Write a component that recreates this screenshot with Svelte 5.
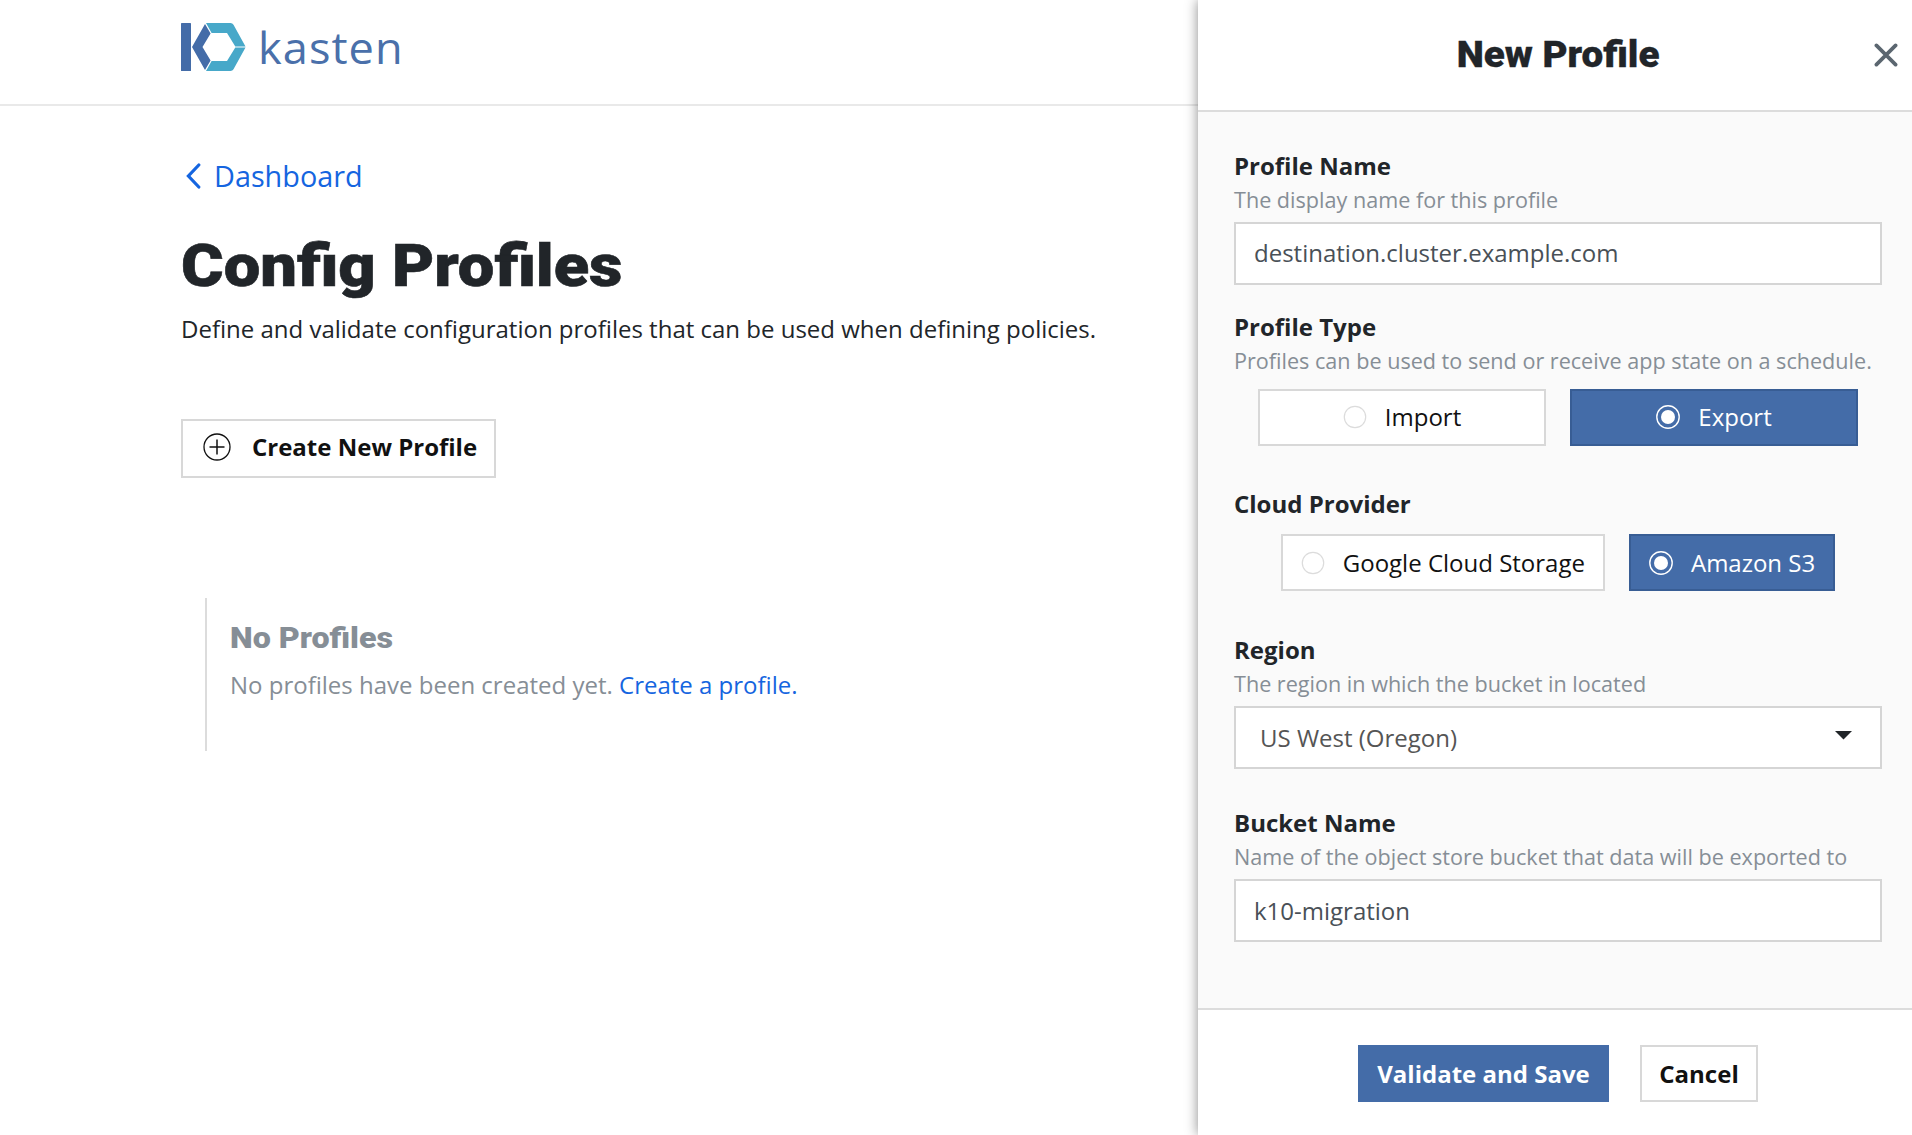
<script>
  let profileType = $state('Export');
  let provider = $state('Amazon S3');
  let profileName = $state('destination.cluster.example.com');
  let bucketName = $state('k10-migration');
  const types = ['Import', 'Export'];
  const providers = ['Google Cloud Storage', 'Amazon S3'];
</script>

{#snippet radio(name, selected, choose)}
  <button class="option" class:selected onclick={choose}>
    <svg class="radio" width="24" height="24" viewBox="0 0 24 24">
      {#if selected}
        <circle cx="12" cy="12" r="11.2" fill="none" stroke="#fff" stroke-width="1.4" />
        <circle cx="12" cy="12" r="7" fill="#fff" />
      {:else}
        <circle cx="12" cy="12" r="10.7" fill="#fff" stroke="#dcdcdc" stroke-width="1.2" />
      {/if}
    </svg>
    <span>{name}</span>
  </button>
{/snippet}

<div class="app">
  <div class="page">
    <header class="topbar">
      <svg class="mark" width="65" height="48" viewBox="0 0 65 48">
        <rect x="0" y="0" width="10" height="48" rx="0.6" fill="#446ca8" />
        <path d="M24 1 L29.6 10.5 L21.5 24 L29.6 37.5 L24 47 L11 24 Z" fill="#446ca8" />
        <path d="M25 0 H49.5 Q51.5 0 52.5 1.8 L64.5 23.4 H54.3 L46 10 H30.6 Z" fill="#47a8c9" />
        <path d="M25 48 H49.5 Q51.5 48 52.5 46.2 L64.5 24.6 H54.3 L46 38 H30.6 Z" fill="#47a8c9" />
      </svg>
      <span class="wordmark">kasten</span>
    </header>
    <main>
      <a class="back" href="#dashboard">
        <svg width="15" height="26" viewBox="0 0 15 26">
          <path d="M12.8 2 L2.4 13 L12.8 24" fill="none" stroke="#1565e0" stroke-width="3.2" stroke-linecap="round" />
        </svg>
        <span>Dashboard</span>
      </a>
      <h1>Config Profiles</h1>
      <p class="lead">Define and validate configuration profiles that can be used when defining policies.</p>
      <button class="create">
        <svg width="28" height="28" viewBox="0 0 28 28" fill="none" stroke="#111">
          <circle cx="14" cy="14" r="13" stroke-width="1.3" />
          <path d="M14 6.5 V21.5 M6.5 14 H21.5" stroke-width="1.5" />
        </svg>
        <span>Create New Profile</span>
      </button>
      <section class="empty">
        <h2>No Profiles</h2>
        <p>No profiles have been created yet. <a href="#create">Create a profile.</a></p>
      </section>
    </main>
  </div>

  <aside class="panel">
    <div class="panel-head">
      <h3>New Profile</h3>
      <button class="close" aria-label="Close">
        <svg width="24" height="24" viewBox="0 0 24 24">
          <path d="M2.4 2.4 L21.6 21.6 M21.6 2.4 L2.4 21.6" fill="none" stroke="#5b6670" stroke-width="3.7" stroke-linecap="round" />
        </svg>
      </button>
    </div>

    <div class="panel-body">
      <div class="field name">
        <div class="label">Profile Name</div>
        <div class="hint">The display name for this profile</div>
        <input class="box" bind:value={profileName} aria-label="Profile Name" />
      </div>
      <div class="field type">
        <div class="label">Profile Type</div>
        <div class="hint">Profiles can be used to send or receive app state on a schedule.</div>
        <div class="options wide">
          {#each types as t}{@render radio(t, t === profileType, () => (profileType = t))}{/each}
        </div>
      </div>
      <div class="field provider">
        <div class="label">Cloud Provider</div>
        <div class="options">
          {#each providers as p}{@render radio(p, p === provider, () => (provider = p))}{/each}
        </div>
      </div>
      <div class="field region">
        <div class="label">Region</div>
        <div class="hint">The region in which the bucket in located</div>
        <div class="box select">
          <span>US West (Oregon)</span>
          <svg width="17" height="9" viewBox="0 0 17 9"><path d="M0 0 H17 L8.5 8.5 Z" fill="#212529" /></svg>
        </div>
      </div>
      <div class="field">
        <div class="label">Bucket Name</div>
        <div class="hint">Name of the object store bucket that data will be exported to</div>
        <input class="box" bind:value={bucketName} aria-label="Bucket Name" />
      </div>
    </div>

    <footer>
      <button class="save">Validate and Save</button>
      <button class="cancel">Cancel</button>
    </footer>
  </aside>
</div>

<style>
  :global(body) { margin: 0; background: #fff; overflow: hidden; }
  .app {
    display: flex;
    width: 1912px;
    height: 1135px;
    font-family: "Open Sans", "Noto Sans", sans-serif;
    font-size: 24px;
    line-height: 34px;
    color: #212529;
  }
  .app * { box-sizing: border-box; }
  button, input { font: inherit; margin: 0; border-radius: 0; }
  button { padding: 0; cursor: pointer; }
  h1, h2, h3, p { margin: 0; }
  h1, h2, h3 {
    width: max-content;
    font-family: Roboto, "Open Sans", sans-serif;
    font-weight: 900;
    transform-origin: left center;
  }
  a { color: #1565e0; text-decoration: none; }
  svg { display: block; flex: none; }

  .page { width: 1198px; flex: none; }
  .topbar {
    height: 106px;
    padding: 23px 0 0 181px;
    display: flex;
    border-bottom: 2px solid #e9e9e9;
  }
  .wordmark {
    margin: 1px 0 0 12px;
    font-size: 43px;
    line-height: 48px;
    color: #4a70aa;
    letter-spacing: 1px;
    transform: scaleX(1.05);
    transform-origin: left center;
  }
  main { padding: 50px 0 0 181px; }
  .back {
    display: flex;
    align-items: center;
    width: max-content;
    height: 42px;
    padding: 0 0 2px 4.5px;
    gap: 13.5px;
    font-size: 28.8px;
    line-height: 40px;
  }
  h1 {
    margin-top: 32px;
    font-size: 60px;
    line-height: 70px;
    white-space: nowrap;
    transform: translateY(1px) scaleX(1.084);
    -webkit-text-stroke: 0.6px currentColor;
  }
  .lead { margin-top: 12px; white-space: nowrap; }
  .create {
    display: flex;
    align-items: center;
    width: 315px;
    height: 59px;
    margin-top: 73px;
    padding: 0 0 3px 20px;
    gap: 21px;
    background: #fff;
    border: 2px solid #d8d8d8;
    color: #111;
    font-weight: 700;
    white-space: nowrap;
  }
  .empty {
    width: 800px;
    height: 153px;
    margin: 120px 0 0 24px;
    padding: 20px 0 0 23px;
    border-left: 2px solid #dcdcdc;
    color: #868e96;
  }
  h2 { font-size: 30px; line-height: 40px; transform: scaleX(1.075); }
  .empty p { margin-top: 10px; }

  .panel {
    display: flex;
    flex-direction: column;
    width: 714px;
    flex: none;
    background: #fff;
    box-shadow: 0 0 12px rgba(0, 0, 0, 0.46);
  }
  .panel-head {
    height: 112px;
    display: grid;
    grid-template-columns: 36px 648px 30px;
    align-items: center;
    border-bottom: 2px solid #dcdcdc;
  }
  h3 {
    grid-column: 2;
    justify-self: center;
    font-size: 36px;
    line-height: 50px;
    transform: translateX(0.5px) scaleX(1.072);
    transform-origin: center;
    -webkit-text-stroke: 0.3px currentColor;
  }
  .close { border: 0; background: none; justify-self: center; margin: 0 22px 1px 0; }
  .panel-body {
    flex: 1;
    padding: 37px 30px 0 36px;
    background: #fafafa;
  }
  .label { font-weight: 700; height: 34px; }
  .hint { font-size: 21.6px; line-height: 33px; height: 34px; color: #868e96; white-space: nowrap; }
  .box {
    display: flex;
    align-items: center;
    width: 648px;
    height: 63px;
    margin-top: 5px;
    padding: 0 18px;
    background: #fff;
    border: 2px solid #d5d5d5;
    color: #495057;
    outline: none;
  }
  .name .box { padding-bottom: 2px; }
  .select { justify-content: space-between; padding: 0 28px 0 24px; color: #555; }
  .select svg { margin: 0 0 5px 0; }
  .name { height: 161px; }
  .type { height: 177px; }
  .provider { height: 146px; }
  .region { height: 173px; }
  .options { display: flex; justify-content: center; gap: 24px; margin-top: 13px; }
  .options.wide { margin-top: 11px; }
  .option {
    display: flex;
    align-items: center;
    justify-content: center;
    height: 57px;
    padding: 0 18px;
    gap: 18px;
    background: #fff;
    border: 2px solid #d8d8d8;
    color: #111;
    white-space: nowrap;
  }
  .wide :global(.option) { width: 288px; padding-bottom: 1px; }
  .selected { background: #446ca8; border-color: #385d94; color: #fff; }
  footer {
    height: 127px;
    display: flex;
    justify-content: center;
    gap: 31px;
    padding: 35px 30px 0 36px;
    border-top: 2px solid #dcdcdc;
  }
  footer button { height: 57px; font-weight: 700; }
  .save { width: 251px; border: 0; background: #446ca8; color: #fff; }
  .cancel { width: 118px; border: 2px solid #d8d8d8; background: #fff; color: #111; }
</style>
